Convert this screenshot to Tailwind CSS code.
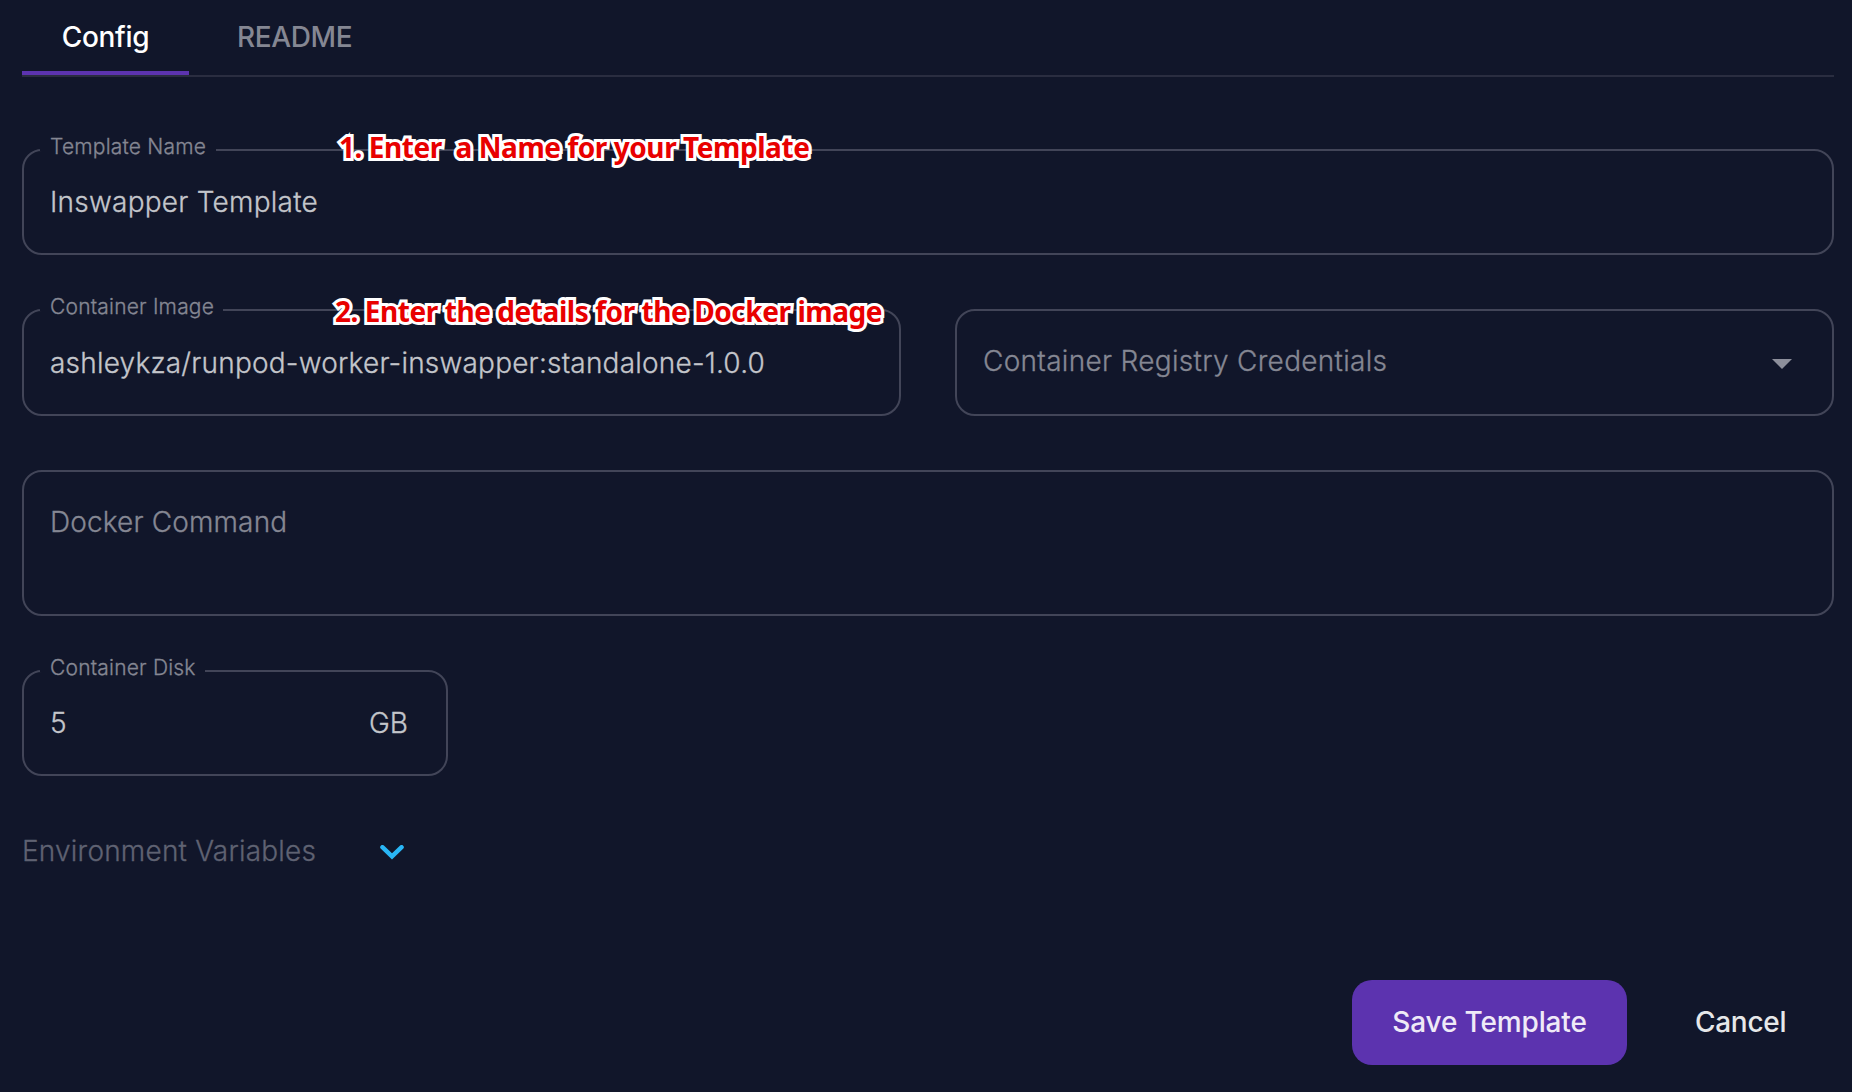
<!DOCTYPE html>
<html lang="en">
<head>
<meta charset="utf-8">
<title>Template Config</title>
<script src="https://cdn.jsdelivr.net/npm/@tailwindcss/browser@4"></script>
</head>
<body class="bg-[#11162a] font-['Inter',sans-serif] text-[28px] leading-[34px] font-light text-[#c3c5ca] [-webkit-text-stroke:0.3px_currentColor]">
<main class="flex h-[1092px] w-[1852px] flex-col overflow-hidden pl-[22px] pr-[18px]">
  <nav class="flex h-[77px] shrink-0 border-b-2 border-[#2a2d40] font-medium [-webkit-text-stroke:0px]">
    <div class="w-[167px] border-b-4 border-[#5c33af] pt-5 text-center text-white"><span class="inline-block tracking-[-0.3px]">Config</span></div>
    <div class="pl-[48px] pt-5 text-[#858793]"><span class="inline-block tracking-[-0.4px]">README</span></div>
  </nav>

  <fieldset class="relative mt-[72px] h-[106px] shrink-0 rounded-[20px] border-2 border-[#424558]">
    <legend class="ml-4 flex h-[2px] w-[176px] items-center pl-[10px] text-[21px] whitespace-nowrap text-[#858793]"><span class="-mt-[6px] tracking-[0.2px]">Template Name</span></legend>
    <div class="pl-[26px] pt-[34px]"><span class="tracking-[0.24px]">Inswapper Template</span></div>
    <div class="absolute left-[315px] top-[-23px] whitespace-pre font-['Noto_Sans'] text-[28px] leading-[38px] font-bold tracking-[-0.44px] text-[#e80000] [-webkit-text-stroke:6px_white] [paint-order:stroke_fill]">1. Enter  a Name for your Template</div>
  </fieldset>

  <div class="mt-[54px] flex shrink-0 gap-[54px]">
    <fieldset class="relative h-[107px] w-[879px] rounded-[20px] border-2 border-[#424558]">
      <legend class="ml-4 flex h-[2px] w-[183px] items-center pl-[10px] text-[21px] whitespace-nowrap text-[#858793]"><span class="-mt-[6px] tracking-[0.2px]">Container Image</span></legend>
      <div class="pl-[26px] pt-[35px]"><span class="tracking-[0.2px]">ashleykza/runpod-worker-inswapper:standalone-1.0.0</span></div>
      <div class="absolute left-[311px] top-[-19px] whitespace-pre font-['Noto_Sans'] text-[28px] leading-[38px] font-bold tracking-[-0.44px] text-[#e80000] [-webkit-text-stroke:6px_white] [paint-order:stroke_fill]">2. Enter the details for the Docker image</div>
    </fieldset>
    <div class="flex h-[107px] w-[879px] justify-between rounded-[20px] border-2 border-[#424558] pl-[26px] pr-[40px] pt-[33px] text-[#858793]">
      <span class="tracking-[0.3px]">Container Registry Credentials</span>
      <svg class="mt-[15px] h-[10px] w-5" viewBox="0 0 20 10" fill="#8d8f9b"><path d="M0 0h20L10 10z"/></svg>
    </div>
  </div>

  <div class="mt-[54px] h-[146px] shrink-0 rounded-[20px] border-2 border-[#424558] pl-[26px] pt-[33px] text-[#858793]"><span class="tracking-[0.14px]">Docker Command</span></div>

  <fieldset class="mt-[54px] h-[106px] w-[426px] shrink-0 rounded-[20px] border-2 border-[#424558]">
    <legend class="ml-4 flex h-[2px] w-[165px] items-center pl-[10px] text-[21px] whitespace-nowrap text-[#858793]"><span class="-mt-[6px] tracking-[0.2px]">Container Disk</span></legend>
    <div class="flex justify-between pl-[26px] pr-[38px] pt-[34px]"><span>5</span><span>GB</span></div>
  </fieldset>

  <div class="mt-[58px] flex shrink-0 items-center text-[#5f6272]">
    <span class="w-[358px] tracking-[0.2px]">Environment Variables</span>
    <svg class="mt-[3px] h-[15px] w-6" viewBox="0 0 24 15" fill="none" stroke="#29b6f6" stroke-width="4.4"><path stroke-linecap="round" d="M2.4 2.2L12 11.4l9.6-9.2"/></svg>
  </div>

  <div class="mt-[112px] flex shrink-0 justify-end font-medium [-webkit-text-stroke:0px]">
    <div class="h-[85px] w-[275px] rounded-[20px] bg-[#5c33af] pt-[25px] text-center text-[#efeaf7]"><span class="inline-block tracking-[-0.15px]">Save Template</span></div>
    <div class="w-[207px] pl-[68px] pt-[25px] text-[#e6e7e9]"><span class="inline-block tracking-[-0.3px]">Cancel</span></div>
  </div>
</main>
</body>
</html>
